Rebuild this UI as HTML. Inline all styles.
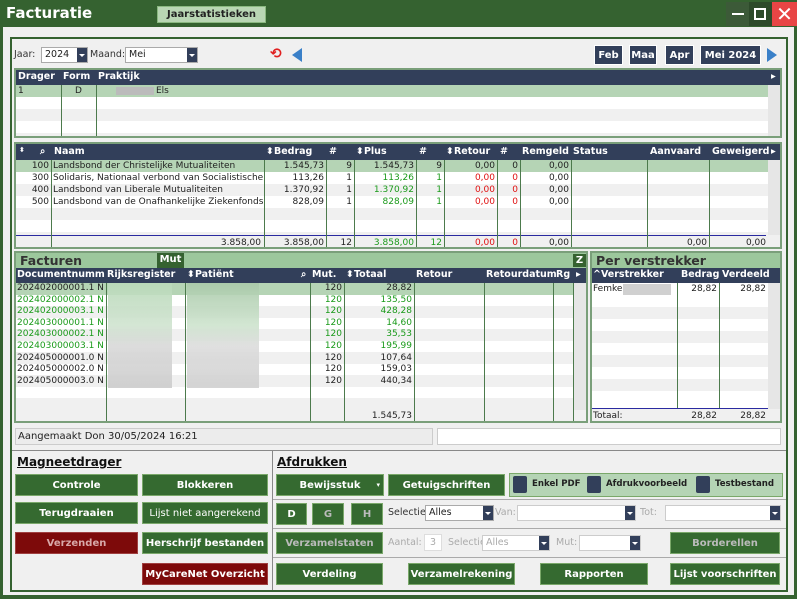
<!DOCTYPE html>
<html><head><meta charset="utf-8"><style>
*{box-sizing:border-box;margin:0;padding:0}
body{width:797px;height:599px;overflow:hidden;background:#356230;font-family:"DejaVu Sans",Verdana,sans-serif;font-size:9px;color:#222;position:relative}
.a{position:absolute}
.hd{background:#323f5a;color:#fff;font-weight:bold;font-size:9.5px}
.btn{position:absolute;background:#356a30;border:1px solid #7aa86a;color:#fff;font-weight:bold;font-size:10px;display:flex;align-items:center;justify-content:center;white-space:nowrap}
.red{background:#7d0a0a;border-color:#a04040}
.tbl{position:absolute;background:#fff;border:2px solid #7a9f7a;overflow:hidden}
.row{position:absolute;left:0;right:0;height:12px}
.vl{position:absolute;top:0;bottom:0;width:1px;background:#4c7a4c}
.t{position:absolute;white-space:nowrap;line-height:12px}
.r{text-align:right}
.g{color:#1a9a1a}.rd{color:#e01010}
.sel{position:absolute;background:#fff;border:1px solid #aaa;height:16px;font-size:9.5px;line-height:14px;padding-left:3px}
.sel i{position:absolute;right:0;top:0;bottom:0;width:10px;background:#323f5a}
.sel i:after{content:"";position:absolute;left:2px;top:6px;border:3px solid transparent;border-top:3px solid #fff}
.sb{position:absolute;width:14px;background:#e6e6e6}
.lbl{position:absolute;font-size:9.5px;color:#333}
.dis{color:#aaa}
</style></head><body>
<!-- title -->
<div class="a" style="left:6px;top:4px;color:#fff;font-weight:bold;font-size:15px">Facturatie</div>
<div class="a" style="left:157px;top:6px;width:109px;height:17px;background:#b9d6b4;border:1px solid #8ab880;font-weight:bold;font-size:10px;text-align:center;line-height:15px;color:#222">Jaarstatistieken</div>
<div class="a" style="left:726px;top:2px;width:23px;height:24px;background:#3c5a38"></div>
<div class="a" style="left:732px;top:13px;width:12px;height:2px;background:#fff"></div>
<div class="a" style="left:749px;top:2px;width:23px;height:24px;background:#2d4a2a"></div>
<div class="a" style="left:754px;top:8px;width:12px;height:12px;border:2px solid #fff"></div>
<div class="a" style="left:772px;top:2px;width:25px;height:24px;background:#e84545;color:#fff;font-size:20px;font-weight:bold;text-align:center;line-height:24px">✕</div>
<!-- content -->
<div class="a" style="left:3px;top:27px;width:791px;height:568px;background:#f0f0f0"></div>
<div class="a" style="left:10px;top:37px;width:778px;height:555px;border:2px solid #356230"></div>

<div class="lbl" style="left:14px;top:49px">Jaar:</div>
<div class="sel" style="left:41px;top:47px;width:47px">2024<i></i></div>
<div class="lbl" style="left:90px;top:49px">Maand:</div>
<div class="sel" style="left:125px;top:47px;width:73px">Mei<i></i></div>
<div class="a" style="left:270px;top:47px;color:#e02020;font-size:14px;font-weight:bold;line-height:14px">⟲</div>
<div class="a" style="left:292px;top:48px;border:7px solid transparent;border-right:10px solid #3a80c8;border-left:0"></div>
<div class="btn" style="left:594px;top:45px;width:29px;height:20px;background:#323f5a;border-color:#fff">Feb</div>
<div class="btn" style="left:629px;top:45px;width:28px;height:20px;background:#323f5a;border-color:#fff">Maa</div>
<div class="btn" style="left:665px;top:45px;width:29px;height:20px;background:#323f5a;border-color:#fff">Apr</div>
<div class="btn" style="left:700px;top:45px;width:61px;height:20px;background:#323f5a;border-color:#fff">Mei 2024</div>
<div class="a" style="left:767px;top:48px;border:7px solid transparent;border-left:10px solid #3a80c8;border-right:0"></div>

<!-- drager table -->
<div class="tbl" style="left:14px;top:68px;width:768px;height:70px">
 <div class="row hd" style="top:0;height:15px"><span class="t" style="left:2px;top:1px">Drager</span><span class="t" style="left:47px;top:1px">Form</span><span class="t" style="left:82px;top:1px">Praktijk</span><span class="t" style="left:755px;top:1px">▸</span></div>
 <div class="row" style="top:15px;background:#b5d4b5"><span class="t" style="left:2px">1</span><span class="t" style="left:59px">D</span><span class="t" style="left:100px;width:38px;height:8px;top:2px;background:#bbb"></span><span class="t" style="left:140px">Els</span></div>
 <div class="row" style="top:39px;background:#f0f0f0"></div><div class="row" style="top:63px;background:#f0f0f0"></div>
 <div class="vl" style="left:45px;top:15px"></div><div class="vl" style="left:80px;top:15px"></div>
 <div class="sb" style="left:752px;top:15px;bottom:0"></div>
</div>

<!-- mutualiteit table -->
<div class="tbl" style="left:14px;top:142px;width:768px;height:107px">
 <div class="row hd" style="top:0;height:16px">
  <span class="t" style="left:3px;top:0;font-size:7px">⬍</span><span class="t" style="left:24px;top:2px">⌕</span>
  <span class="t" style="left:38px;top:2px">Naam</span><span class="t" style="left:250px;top:2px">⬍Bedrag</span><span class="t" style="left:313px;top:2px">#</span>
  <span class="t" style="left:340px;top:2px">⬍Plus</span><span class="t" style="left:403px;top:2px">#</span><span class="t" style="left:430px;top:2px">⬍Retour</span>
  <span class="t" style="left:484px;top:2px">#</span><span class="t" style="left:506px;top:2px">Remgeld</span><span class="t" style="left:557px;top:2px">Status</span>
  <span class="t" style="left:634px;top:2px">Aanvaard</span><span class="t" style="left:696px;top:2px">Geweigerd</span><span class="t" style="left:755px;top:2px">▸</span></div>
 <div class="row" style="top:16px;background:#b5d4b5"></div>
 <div class="row" style="top:40px;background:#f0f0f0"></div><div class="row" style="top:64px;background:#f0f0f0"></div><div class="row" style="top:88px;background:#f0f0f0;height:18px"></div>
 <div class="a" style="left:0;right:14px;top:91px;height:1px;background:#2a2aa0"></div>
 <div class="vl" style="left:35px;top:16px"></div><div class="vl" style="left:248px;top:16px"></div><div class="vl" style="left:310px;top:16px"></div>
 <div class="vl" style="left:338px;top:16px"></div><div class="vl" style="left:400px;top:16px"></div><div class="vl" style="left:428px;top:16px"></div>
 <div class="vl" style="left:481px;top:16px"></div><div class="vl" style="left:504px;top:16px"></div><div class="vl" style="left:555px;top:16px"></div>
 <div class="vl" style="left:631px;top:16px"></div><div class="vl" style="left:693px;top:16px"></div>
 <div class="sb" style="left:752px;top:16px;height:75px"></div>
 <div class="t r" style="left:0;width:33px;top:16px">100<br>300<br>400<br>500</div>
 <div class="t" style="left:37px;top:16px;width:210px;overflow:hidden">Landsbond der Christelijke Mutualiteiten<br>Solidaris, Nationaal verbond van Socialistische<br>Landsbond van Liberale Mutualiteiten<br>Landsbond van de Onafhankelijke Ziekenfondsen</div>
 <div class="t r" style="left:250px;width:58px;top:16px">1.545,73<br>113,26<br>1.370,92<br>828,09</div>
 <div class="t r" style="left:312px;width:24px;top:16px">9<br>1<br>1<br>1</div>
 <div class="t r" style="left:340px;width:58px;top:16px"><span>1.545,73</span><br><span class="g">113,26<br>1.370,92<br>828,09</span></div>
 <div class="t r" style="left:402px;width:24px;top:16px">9<br><span class="g">1<br>1<br>1</span></div>
 <div class="t r rd" style="left:430px;width:49px;top:16px"><span style="color:#222">0,00</span><br>0,00<br>0,00<br>0,00</div>
 <div class="t r rd" style="left:483px;width:19px;top:16px"><span style="color:#222">0</span><br>0<br>0<br>0</div>
 <div class="t r" style="left:506px;width:47px;top:16px">0,00<br>0,00<br>0,00<br>0,00</div>
 <div class="t r" style="left:37px;width:208px;top:93px">3.858,00</div>
 <div class="t r" style="left:250px;width:58px;top:93px">3.858,00</div>
 <div class="t r" style="left:312px;width:24px;top:93px">12</div>
 <div class="t r g" style="left:340px;width:58px;top:93px">3.858,00</div>
 <div class="t r g" style="left:402px;width:24px;top:93px">12</div>
 <div class="t r rd" style="left:430px;width:49px;top:93px">0,00</div>
 <div class="t r rd" style="left:483px;width:19px;top:93px">0</div>
 <div class="t r" style="left:506px;width:47px;top:93px">0,00</div>
 <div class="t r" style="left:633px;width:58px;top:93px">0,00</div>
 <div class="t r" style="left:695px;width:55px;top:93px">0,00</div>
</div>

<!-- facturen -->
<div class="tbl" style="left:14px;top:251px;width:574px;height:172px">
 <div class="row" style="top:0;height:15px;background:#9cc79c"><span class="t" style="left:4px;top:1px;font-size:12.5px;font-weight:bold;color:#333;line-height:13px">Facturen</span></div>
 <div class="a" style="left:141px;top:0;width:27px;height:15px;background:#356230;color:#fff;font-weight:bold;font-size:10px;text-align:center;line-height:14px">Mut</div>
 <div class="a" style="left:557px;top:1px;width:13px;height:13px;background:#356230;color:#fff;font-weight:bold;font-size:10px;text-align:center;line-height:13px">Z</div>
 <div class="row hd" style="top:15px;height:15px">
  <span class="t" style="left:1px;top:1px;width:88px;overflow:hidden">Documentnummer</span><span class="t" style="left:91px;top:1px">Rijksregister</span>
  <span class="t" style="left:171px;top:1px">⬍Patiënt</span><span class="t" style="left:285px;top:1px">⌕</span><span class="t" style="left:296px;top:1px">Mut.</span>
  <span class="t" style="left:330px;top:1px">⬍Totaal</span><span class="t" style="left:400px;top:1px">Retour</span><span class="t" style="left:470px;top:1px">Retourdatum</span>
  <span class="t" style="left:540px;top:1px">Rg</span><span class="t" style="left:560px;top:1px">▸</span></div>
 <div class="row" style="top:30px;background:#b5d4b5"></div>
 <div class="row" style="top:53px;background:#f0f0f0"></div><div class="row" style="top:76px;background:#f0f0f0"></div><div class="row" style="top:99px;background:#f0f0f0"></div><div class="row" style="top:122px;background:#f0f0f0"></div><div class="row" style="top:145px;background:#f0f0f0;height:30px"></div>
 <div class="a" style="left:92px;top:30px;width:64px;height:105px;background:linear-gradient(#b9d9b9,#cfe3cf 40%,#d8d8d8 60%,#ccc);opacity:.9"></div>
 <div class="a" style="left:171px;top:30px;width:72px;height:105px;background:linear-gradient(#a9c9a9,#cde3cd 40%,#dcdcdc 60%,#d0d0d0);opacity:.9"></div>
 <div class="vl" style="left:90px;top:30px"></div><div class="vl" style="left:169px;top:30px"></div><div class="vl" style="left:294px;top:30px"></div>
 <div class="vl" style="left:328px;top:30px"></div><div class="vl" style="left:398px;top:30px"></div><div class="vl" style="left:468px;top:30px"></div>
 <div class="vl" style="left:537px;top:30px"></div><div class="vl" style="left:557px;top:30px"></div>
 <div class="sb" style="left:558px;top:30px;height:127px"></div>
 <div class="t" style="left:1px;top:30px;line-height:11.6px"><span>202402000001.1 N</span><br><span class="g">202402000002.1 N<br>202402000003.1 N<br>202403000001.1 N<br>202403000002.1 N<br>202403000003.1 N</span><br>202405000001.0 N<br>202405000002.0 N<br>202405000003.0 N</div>
 <div class="t r" style="left:296px;width:30px;top:30px;line-height:11.6px">120<br><span class="g">120<br>120<br>120<br>120<br>120</span><br>120<br>120<br>120</div>
 <div class="t r" style="left:330px;width:66px;top:30px;line-height:11.6px">28,82<br><span class="g">135,50<br>428,28<br>14,60<br>35,53<br>195,99</span><br>107,64<br>159,03<br>440,34</div>
 <div class="t r" style="left:330px;width:66px;top:157px">1.545,73</div>
</div>

<!-- per verstrekker -->
<div class="tbl" style="left:590px;top:251px;width:192px;height:172px">
 <div class="row" style="top:0;height:15px;background:#9cc79c"><span class="t" style="left:4px;top:1px;font-size:12.5px;font-weight:bold;color:#333;line-height:13px">Per verstrekker</span></div>
 <div class="row hd" style="top:15px;height:15px"><span class="t" style="left:1px;top:1px">^Verstrekker</span><span class="t" style="left:89px;top:1px">Bedrag</span><span class="t" style="left:130px;top:1px">Verdeeld</span></div>
 <div class="row" style="top:30px;background:#fff"></div>
 <div class="row" style="top:42px;background:#fff"></div><div class="row" style="top:54px;background:#f0f0f0"></div><div class="row" style="top:78px;background:#f0f0f0"></div><div class="row" style="top:102px;background:#f0f0f0"></div><div class="row" style="top:126px;background:#f0f0f0"></div><div class="row" style="top:155px;background:#f0f0f0;height:15px"></div>
 <div class="a" style="left:31px;top:31px;width:48px;height:11px;background:#d0d0d0"></div>
 <div class="vl" style="left:85px;top:30px;height:126px;bottom:auto"></div><div class="vl" style="left:127px;top:30px;height:126px;bottom:auto"></div>
 <div class="a" style="left:0;width:176px;top:155px;height:1px;background:#2a2aa0"></div>
 <div class="sb" style="left:176px;top:30px;height:126px"></div>
 <div class="t" style="left:1px;top:30px">Femke</div>
 <div class="t r" style="left:87px;width:38px;top:30px">28,82</div><div class="t r" style="left:129px;width:45px;top:30px">28,82</div>
 <div class="t" style="left:1px;top:157px">Totaal:</div>
 <div class="t r" style="left:87px;width:38px;top:157px">28,82</div><div class="t r" style="left:129px;width:45px;top:157px">28,82</div>
</div>

<!-- status -->
<div class="a" style="left:15px;top:428px;width:418px;height:17px;border:1px solid #ccc;background:#ececec;font-size:10px;line-height:15px;padding-left:2px">Aangemaakt Don 30/05/2024 16:21</div>
<div class="a" style="left:437px;top:428px;width:344px;height:17px;border:1px solid #ccc;background:#fff"></div>

<!-- bottom -->
<div class="a" style="left:12px;top:450px;width:774px;height:1px;background:#888"></div>
<div class="a" style="left:272px;top:451px;width:1px;height:139px;background:#888"></div>
<div class="a" style="left:273px;top:499px;width:513px;height:1px;background:#aaa"></div>
<div class="a" style="left:273px;top:528px;width:513px;height:1px;background:#aaa"></div>
<div class="a" style="left:273px;top:557px;width:513px;height:1px;background:#aaa"></div>
<div class="a" style="left:17px;top:455px;font-weight:bold;font-size:12px;text-decoration:underline;color:#111">Magneetdrager</div>
<div class="a" style="left:277px;top:455px;font-weight:bold;font-size:12px;text-decoration:underline;color:#111">Afdrukken</div>

<div class="btn" style="left:15px;top:474px;width:123px;height:22px">Controle</div>
<div class="btn" style="left:142px;top:474px;width:126px;height:22px">Blokkeren</div>
<div class="btn" style="left:15px;top:502px;width:123px;height:22px">Terugdraaien</div>
<div class="btn" style="left:142px;top:502px;width:126px;height:22px;font-weight:normal">Lijst niet aangerekend</div>
<div class="btn red" style="left:15px;top:532px;width:123px;height:22px;color:#d8a8a8">Verzenden</div>
<div class="btn" style="left:142px;top:532px;width:126px;height:22px">Herschrijf bestanden</div>
<div class="btn red" style="left:142px;top:563px;width:126px;height:22px">MyCareNet Overzicht</div>

<div class="btn" style="left:276px;top:474px;width:108px;height:22px">Bewijsstuk<span style="position:absolute;right:3px;font-size:7px">▾</span></div>
<div class="btn" style="left:388px;top:474px;width:117px;height:22px">Getuigschriften</div>
<div class="a" style="left:509px;top:473px;width:274px;height:24px;background:#b5d4b5;border:1px solid #7aa86a"></div>
<div class="a" style="left:513px;top:476px;width:14px;height:17px;background:#323f5a;border-radius:2px"></div>
<div class="a" style="left:532px;top:479px;font-weight:bold;font-size:8.6px">Enkel PDF</div>
<div class="a" style="left:587px;top:476px;width:14px;height:17px;background:#323f5a;border-radius:2px"></div>
<div class="a" style="left:606px;top:479px;font-weight:bold;font-size:8.6px">Afdrukvoorbeeld</div>
<div class="a" style="left:696px;top:476px;width:14px;height:17px;background:#323f5a;border-radius:2px"></div>
<div class="a" style="left:715px;top:479px;font-weight:bold;font-size:8.6px">Testbestand</div>

<div class="btn" style="left:276px;top:503px;width:31px;height:22px">D</div>
<div class="btn" style="left:312px;top:503px;width:32px;height:22px;color:#bbb">G</div>
<div class="btn" style="left:351px;top:503px;width:32px;height:22px;color:#bbb">H</div>
<div class="lbl" style="left:388px;top:507px">Selectie</div>
<div class="sel" style="left:425px;top:505px;width:69px">Alles<i></i></div>
<div class="lbl dis" style="left:495px;top:507px">Van:</div>
<div class="sel" style="left:517px;top:505px;width:119px;border-color:#ccc"><i></i></div>
<div class="lbl dis" style="left:640px;top:507px">Tot:</div>
<div class="sel" style="left:665px;top:505px;width:116px;border-color:#ccc"><i></i></div>

<div class="btn" style="left:276px;top:532px;width:107px;height:22px;color:#bbb">Verzamelstaten</div>
<div class="lbl dis" style="left:388px;top:537px">Aantal:</div>
<div class="a dis" style="left:424px;top:534px;width:18px;height:17px;border:1px solid #ddd;background:#fff;text-align:center;line-height:15px;font-size:9.5px">3</div>
<div class="lbl dis" style="left:448px;top:537px">Selectie</div>
<div class="sel dis" style="left:482px;top:535px;width:68px;border-color:#ccc">Alles<i></i></div>
<div class="lbl dis" style="left:556px;top:537px">Mut:</div>
<div class="sel" style="left:579px;top:535px;width:62px;border-color:#ccc"><i></i></div>
<div class="btn" style="left:670px;top:532px;width:110px;height:22px;color:#bbb">Borderellen</div>

<div class="btn" style="left:276px;top:563px;width:107px;height:22px">Verdeling</div>
<div class="btn" style="left:408px;top:563px;width:107px;height:22px">Verzamelrekening</div>
<div class="btn" style="left:540px;top:563px;width:108px;height:22px">Rapporten</div>
<div class="btn" style="left:670px;top:563px;width:110px;height:22px">Lijst voorschriften</div>
</body></html>
